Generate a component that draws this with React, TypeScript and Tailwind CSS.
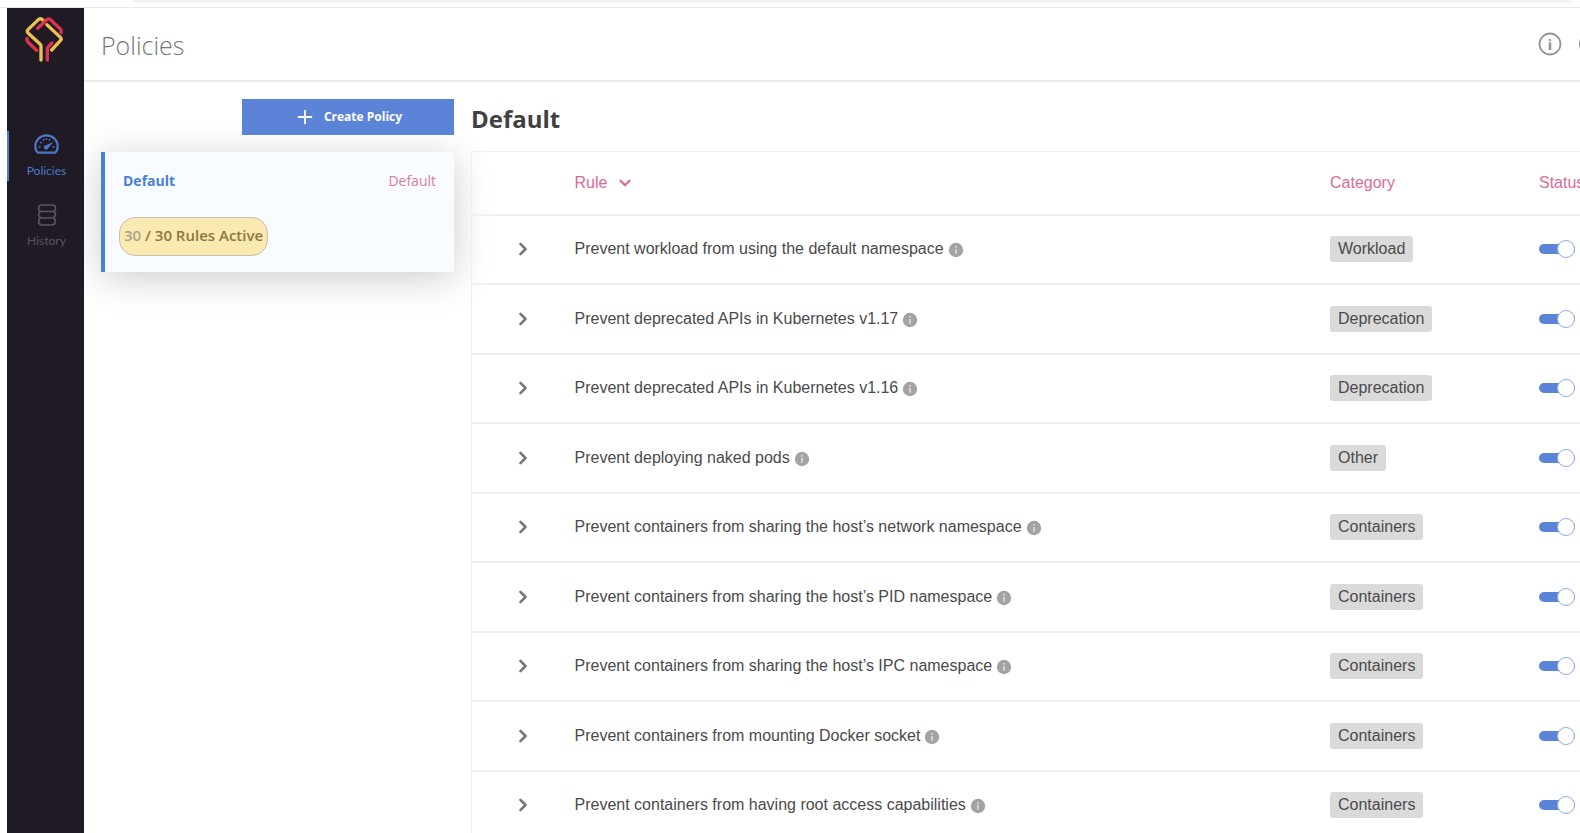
import React, { useState } from "react";
import { ChevronDown, ChevronRight, Plus } from "lucide-react";

interface Rule {
    name: string;
    category: string;
}

const RULES: Rule[] = [
    { name: "Prevent workload from using the default namespace", category: "Workload" },
    { name: "Prevent deprecated APIs in Kubernetes v1.17", category: "Deprecation" },
    { name: "Prevent deprecated APIs in Kubernetes v1.16", category: "Deprecation" },
    { name: "Prevent deploying naked pods", category: "Other" },
    { name: "Prevent containers from sharing the host’s network namespace", category: "Containers" },
    { name: "Prevent containers from sharing the host’s PID namespace", category: "Containers" },
    { name: "Prevent containers from sharing the host’s IPC namespace", category: "Containers" },
    { name: "Prevent containers from mounting Docker socket", category: "Containers" },
    { name: "Prevent containers from having root access capabilities", category: "Containers" },
];

const Logo: React.FC = () => (
    <svg
        viewBox="75 47 114 141"
        className="mr-1 h-[47px] w-[38px]"
        fill="none"
        strokeWidth="10"
        strokeLinecap="round"
        strokeLinejoin="round"
        aria-hidden="true"
    >
        <g stroke="#efc050">
            <path d="M131 62l-5-5q-5-4-10 0L84 88q-4 5 0 10l36 33q3 3 3 7v41" />
            <path d="M141 73l40 38q5 5 0 10l-26 28" />
        </g>
        <g stroke="#dc3350">
            <path d="M81 114v5q0 3 3 6l26 25" />
            <path d="M142 179v-34q0-3 3-6l11-11" />
            <path d="M113 84l29-27q4-3 8 0l31 29q4 4 2 11" />
        </g>
    </svg>
);

const GaugeIcon: React.FC = () => (
    <svg viewBox="0 0 25 20" className="h-5 w-[25px]" fill="none" stroke="currentColor" aria-hidden="true">
        <path
            d="M4 18.700h17c1.700-1.500 2.700-3.800 2.700-6.200a11.200 11.200 0 0 0-22.400 0c0 2.400 1 4.700 2.700 6.200z"
            strokeWidth="2.200"
            strokeLinejoin="round"
        />
        <path
            d="M4.500 13h2M18.500 13h2M6.300 8.100l1.300 1M9.300 5.200l.7 1.400M12.500 4.300v1.600M15.800 5.200l-.7 1.400"
            strokeWidth="1.500"
        />
        <path d="M19.300 8l-5.200 6.300a2.200 2.200 0 1 1-2.100-3.100z" fill="currentColor" stroke="none" />
    </svg>
);

const StackIcon: React.FC = () => (
    <svg viewBox="0 0 20 22" className="h-[22px] w-5" fill="none" stroke="currentColor" strokeWidth="1.700" aria-hidden="true">
        <rect x="1.500" y="1" width="17" height="6.500" rx="3" />
        <path d="M3.500 7.500c-2.700 1.500-2.700 5.500 1 6.500h11c3.700-1 3.700-5 1-6.500" />
        <path d="M3.500 14c-2.700 1.500-2.700 6 1 7h11c3.700-1 3.700-5.500 1-7" />
    </svg>
);

const OutlineInfoIcon: React.FC = () => (
    <svg viewBox="0 0 24 24" className="size-6" fill="none" stroke="#969696" aria-hidden="true">
        <circle cx="12" cy="12" r="10.500" strokeWidth="1.800" />
        <path d="M12 10.200V18" strokeWidth="2.600" />
        <path d="M12 7v2" strokeWidth="2" />
    </svg>
);

const InfoIcon: React.FC = () => (
    <svg viewBox="0 0 16 16" className="size-4" aria-hidden="true">
        <circle cx="8" cy="8" r="7.200" fill="#a3a3a3" />
        <path d="M8 7v4.800M8 4v1.800" stroke="#dadada" strokeWidth="1.700" />
    </svg>
);

const RuleRow: React.FC<{ rule: Rule }> = ({ rule }) => {
    const [active, setActive] = useState(true);

    return (
        <tr className="h-[69px] border-b-2 border-[#efefef] even:h-[70px]">
            <td className="pl-[39px]">
                <button type="button" aria-label={`Expand ${rule.name}`} className="block text-[#777]">
                    <ChevronRight className="size-6" strokeWidth={3} viewBox="-2 -2 28 28" />
                </button>
            </td>
            <td className="whitespace-nowrap">
                <div className="flex items-center gap-1">
                    <span>{rule.name}</span>
                    <button type="button" aria-label="Rule details" className="mt-[2px]">
                        <InfoIcon />
                    </button>
                </div>
            </td>
            <td>
                <span className="inline-block rounded-[3px] bg-[#dadada] px-2 py-px">{rule.category}</span>
            </td>
            <td>
                <label className="relative flex h-5 w-9 cursor-pointer items-center">
                    <input
                        type="checkbox"
                        checked={active}
                        onChange={(e) => setActive(e.target.checked)}
                        aria-label={`${rule.name} status`}
                        className="peer sr-only"
                    />
                    <span className="h-[10px] w-full rounded-full bg-gray-300 peer-checked:bg-[#5b84d9]" />
                    <span className="absolute left-0 size-[18px] rounded-full border border-[#8eabe6] bg-white peer-checked:left-[18px]" />
                </label>
            </td>
        </tr>
    );
};

const App: React.FC = () => {
    return (
        <div className="flex h-screen flex-col overflow-hidden bg-white font-['Open_Sans',sans-serif] text-[#4a4a4a]">
            {/* Bottom edge of the browser's address bar */}
            <div className="h-2 shrink-0 border-b border-[#e6eaea] pr-[7px] pl-[133px]">
                <div className="h-[3px] rounded-b-full bg-[#f1f4f4]" />
            </div>

            <div className="flex min-h-0 flex-1 pl-[7px]">
                <nav className="z-10 flex w-[77px] shrink-0 flex-col items-center bg-[#1f1a24] pt-2 font-[Lato,sans-serif] text-xs">
                    <Logo />
                    <a
                        href="#policies"
                        className="mt-[68px] flex h-[50px] w-full flex-col items-center justify-between border-l-2 border-[#4a7fd6] pt-[3px] pb-[2px] text-[#4d79cc]"
                    >
                        <GaugeIcon />
                        <span>Policies</span>
                    </a>
                    <a
                        href="#history"
                        className="mt-5 flex h-[50px] w-full flex-col items-center justify-between border-l-2 border-transparent pt-[3px] pb-[2px] text-[#5a565f]"
                    >
                        <StackIcon />
                        <span>History</span>
                    </a>
                </nav>

                <div className="flex min-w-0 flex-1 flex-col">
                    <header className="flex h-[74px] shrink-0 items-center justify-between border-b-2 border-[#ececec] pl-[17px]">
                        <h1 className="pt-1 text-[25px] font-light text-[#777]">Policies</h1>
                        <div className="flex w-[42px] gap-[17px] overflow-hidden">
                            <button type="button" aria-label="Information" className="shrink-0">
                                <OutlineInfoIcon />
                            </button>
                            <button type="button" aria-label="Account" className="size-6 shrink-0 rounded-full border border-[#8c8c8c]" />
                        </div>
                    </header>

                    <div className="flex min-h-0 flex-1 gap-[17px] pl-[17px]">
                        <aside className="w-[353px] shrink-0 pt-[17px]">
                            <button
                                type="button"
                                className="relative z-10 ml-auto flex h-9 w-[212px] items-center justify-center gap-2 bg-[#5b84d9] text-xs font-bold text-white"
                            >
                                <Plus className="size-[22px]" strokeWidth={2} />
                                Create Policy
                            </button>
                            <section className="mt-[17px] h-[120px] border-l-4 border-[#4a7fd6] bg-[#f8fbff] px-[18px] pt-[18px] shadow-[0_6px_36px_rgba(0,0,0,0.2)]">
                                <div className="flex justify-between text-sm leading-[22px]">
                                    <h2 className="font-bold text-[#4a7fd6]">Default</h2>
                                    <span className="text-[#db7ba3]">Default</span>
                                </div>
                                <p className="-ml-1 mt-[25px] inline-block h-[39px] rounded-2xl border border-[#c8c2ae] bg-[#fae9b0] px-1 text-[15px] leading-[35px] font-semibold text-[#8a7840]">
                                    <span className="text-[#a9a48c]">30</span> / 30 Rules Active
                                </p>
                            </section>
                        </aside>

                        <main className="min-w-0 flex-1">
                            <h2 className="flex h-[69px] items-center pt-1 text-2xl font-bold text-[#414141]">Default</h2>
                            <table className="w-full table-fixed border-t border-l border-[#efefef] text-left font-['Liberation_Sans',Arial,sans-serif] text-base">
                                <thead>
                                    <tr className="h-[63px] border-b-2 border-[#f1f1f1] text-[#db6a98]">
                                        <th className="w-[103px]" />
                                        <th className="font-normal">
                                            <button type="button" className="flex items-center gap-[9px]">
                                                Rule
                                                <ChevronDown className="size-[18px]" strokeWidth={3} />
                                            </button>
                                        </th>
                                        <th className="w-[209px] font-normal">Category</th>
                                        <th className="w-[41px] font-normal whitespace-nowrap">Status</th>
                                    </tr>
                                </thead>
                                <tbody>
                                    {RULES.map((rule) => (
                                        <RuleRow key={rule.name} rule={rule} />
                                    ))}
                                </tbody>
                            </table>
                        </main>
                    </div>
                </div>
            </div>
        </div>
    );
};

export default App;
